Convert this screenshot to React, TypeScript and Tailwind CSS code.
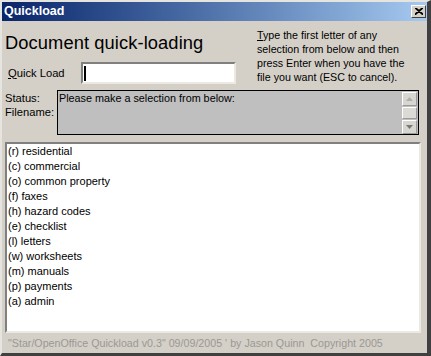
import React from 'react';

const items = [
  '(r) residential',
  '(c) commercial',
  '(o) common property',
  '(f) faxes',
  '(h) hazard codes',
  '(e) checklist',
  '(l) letters',
  '(w) worksheets',
  '(m) manuals',
  '(p) payments',
  '(a) admin',
];

export default function App() {
  return (
    <div className="w-[431px] h-[356px] bg-[#d4d0c8] flex flex-col font-['Liberation_Sans',Arial,sans-serif] text-black border-t-2 border-l-2 border-r-[4px] border-b-[3px] border-t-[#e6e4df] border-l-[#e6e4df] border-r-[#404040] border-b-[#404040]">
      {/* title bar */}
      <div className="h-[19px] flex items-center justify-between bg-linear-to-r from-[#0a246a] to-[#a6caf0] pl-[2px] pr-[1px]">
        <span className="text-white font-bold text-[12.5px] leading-none">Quickload</span>
        <button className="w-[15px] h-[13px] bg-[#d4d0c8] border border-t-white border-l-white border-r-[#404040] border-b-[#404040] flex items-center justify-center">
          <svg width="8" height="7" viewBox="0 0 8 7">
            <path d="M0 0 L8 7 M8 0 L0 7 M1 0 L8 6 M7 0 L0 6" stroke="#000" strokeWidth="1.2" />
          </svg>
        </button>
      </div>

      {/* header section */}
      <div className="flex">
        <div className="w-[255px] flex flex-col">
          <h1 className="mt-[11px] pl-[3px] text-[18.3px] leading-[22px] tracking-[0.1px] font-normal">Document quick-loading</h1>
          <div className="mt-[8px] flex items-center">
            <label className="pl-[6px] w-[79px] text-[11.2px]">
              <span className="underline">Q</span>uick Load
            </label>
            <div className="w-[155px] h-[22px] bg-white border-2 border-t-[#808080] border-l-[#808080] border-r-[#ece9e3] border-b-[#ece9e3] flex items-center pl-[1px]">
              <div className="w-[2px] h-[15px] bg-black" />
            </div>
          </div>
        </div>
        <p className="mt-[7px] text-[10.7px] leading-[14px] whitespace-nowrap">
          <span className="underline">T</span>ype the first letter of any<br />
          selection from below and then<br />
          press Enter when you have the<br />
          file you want (ESC to cancel).
        </p>
      </div>

      {/* status row */}
      <div className="flex mt-[6px]">
        <div className="w-[55px] pl-[3px] pt-[1px] text-[11.2px] leading-[14px]">
          <div>Status:</div>
          <div>Filename:</div>
        </div>
        <div className="w-[362px] h-[45px] bg-[#bfbfbf] border border-black flex justify-between">
          <span className="pl-[1px] text-[10.8px] leading-[14px]">Please make a selection from below:</span>
          <div className="w-[15px] mr-[1px] mt-[1px] flex flex-col gap-[1px]">
            <div className="h-[14px] bg-[#d8d6d0] border border-t-white border-l-white border-r-[#9a9a9a] border-b-[#9a9a9a] flex items-center justify-center">
              <svg width="7" height="4" viewBox="0 0 7 4"><path d="M3.5 0 L7 4 L0 4 Z" fill="#b0aea8" /></svg>
            </div>
            <div className="h-[13px] bg-[#dcdad4] border border-t-white border-l-white border-r-[#9a9a9a] border-b-[#9a9a9a]" />
            <div className="h-[14px] bg-[#d8d6d0] border border-t-white border-l-white border-r-[#9a9a9a] border-b-[#9a9a9a] flex items-center justify-center">
              <svg width="7" height="4" viewBox="0 0 7 4"><path d="M0 0 L7 0 L3.5 4 Z" fill="#7a7874" /></svg>
            </div>
          </div>
        </div>
      </div>

      {/* list */}
      <div className="ml-[3px] mt-[7px] w-[416px] h-[191px] bg-white border-2 border-t-[#808080] border-l-[#808080] border-r-[#ece9e3] border-b-[#ece9e3] pl-[1px]">
        {items.map(i => (
          <div key={i} className="text-[11px] leading-[15px]">{i}</div>
        ))}
      </div>

      {/* footer */}
      <div className="mt-[3px] pl-[6px] text-[10.7px] leading-[14px] text-[#9a9894] whitespace-pre">
        "Star/OpenOffice Quickload v0.3" 09/09/2005 ' by Jason Quinn  Copyright 2005
      </div>
    </div>
  );
}
